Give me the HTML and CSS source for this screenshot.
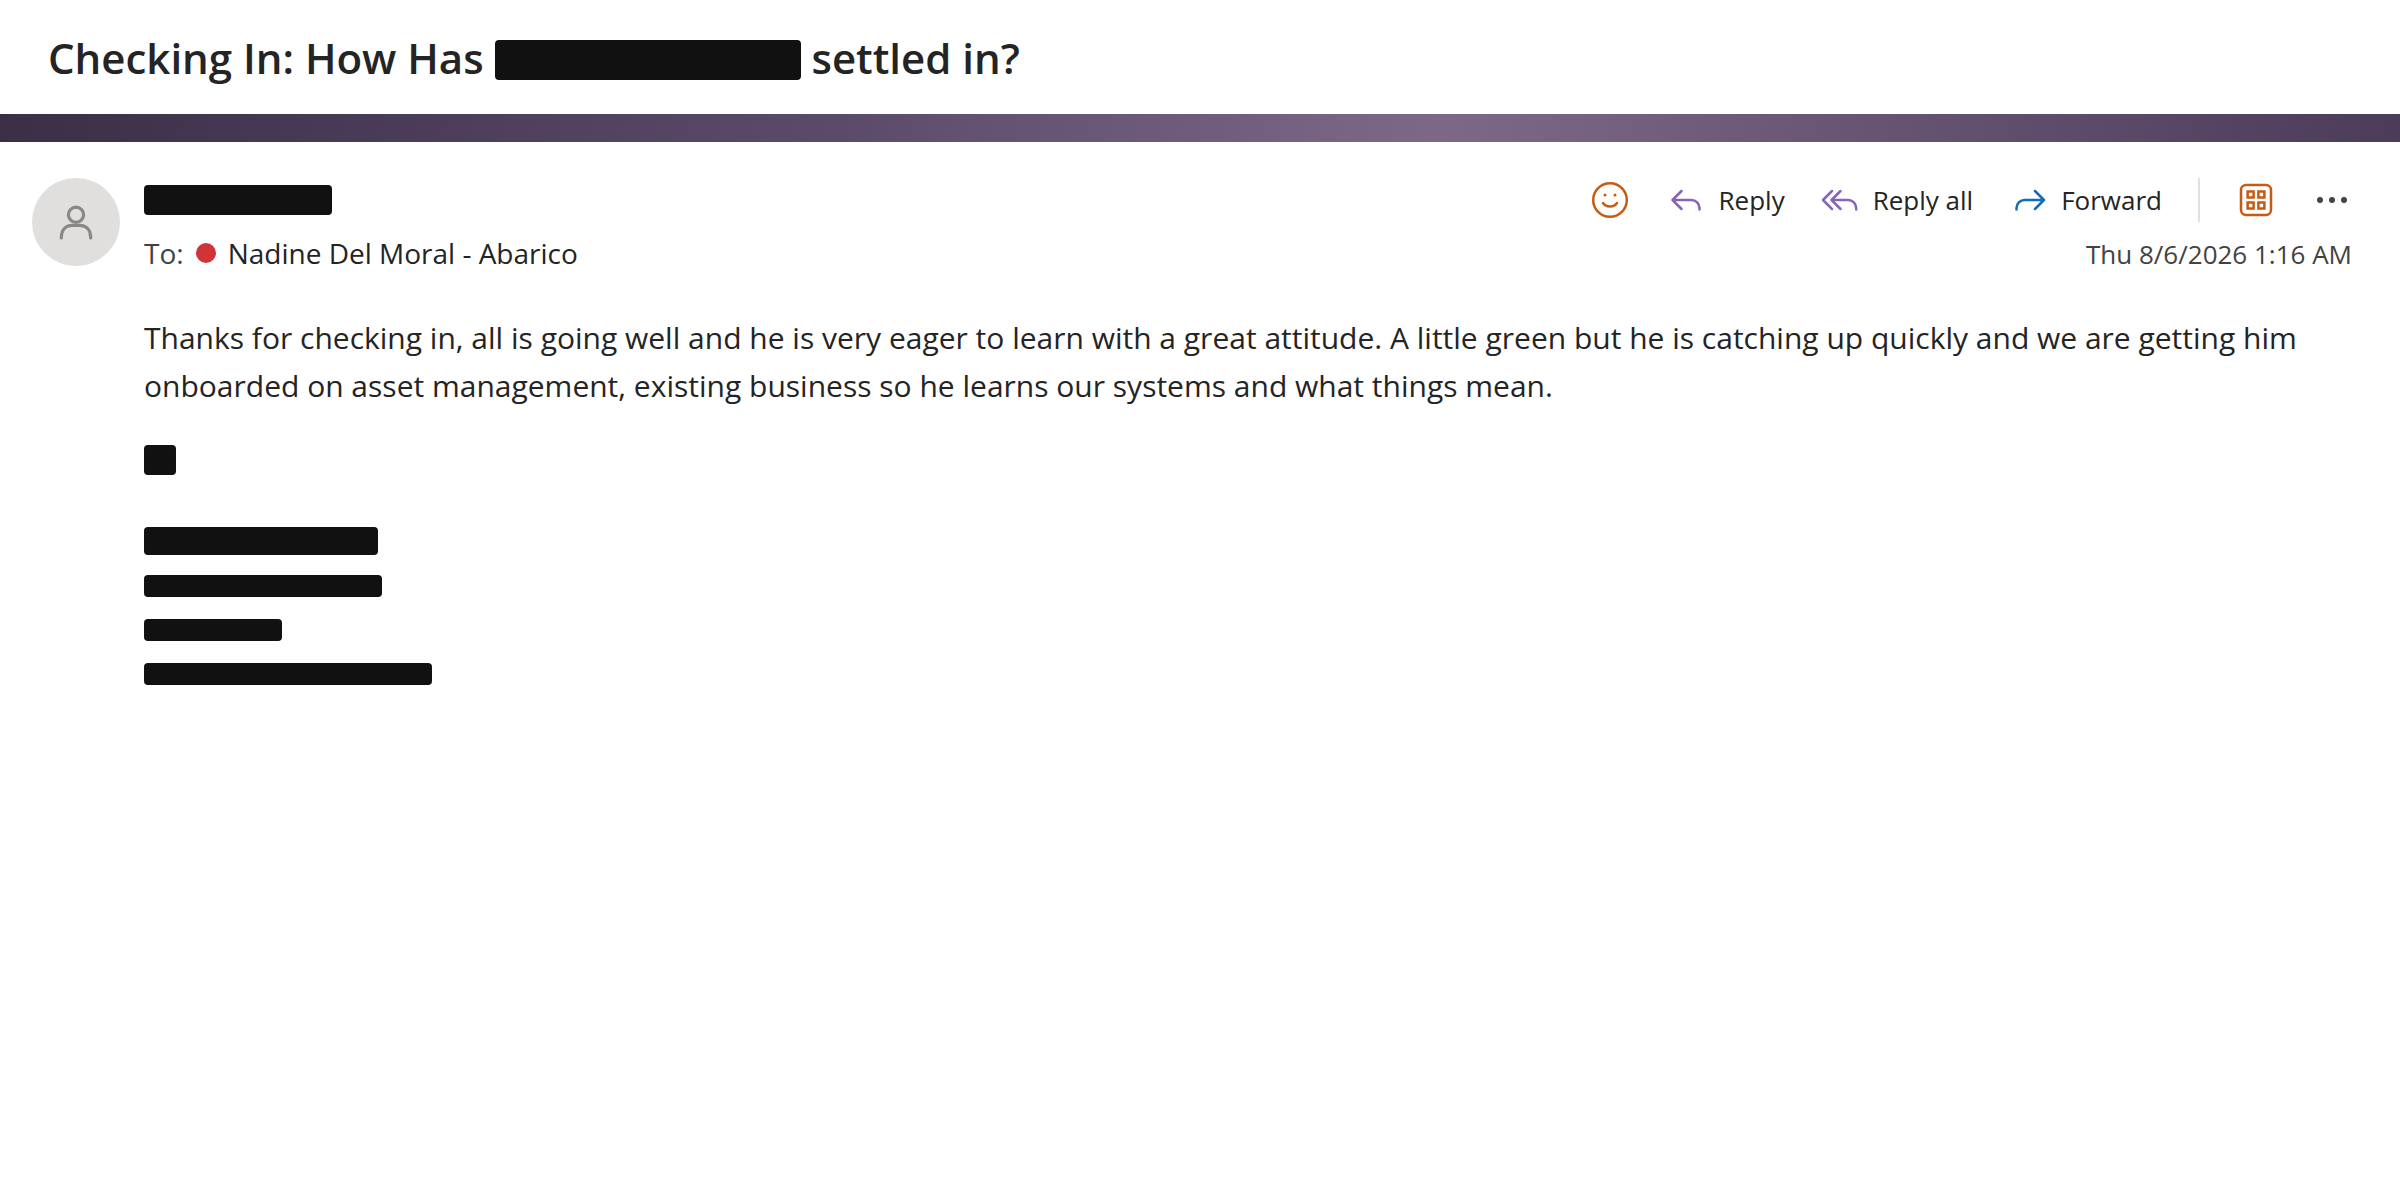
FILE: index.html
```html
<!DOCTYPE html>
<html lang="en">
<head>
    <meta charset="UTF-8">
    <title>Checking In</title>
    <link rel="stylesheet" href="styles.css">
</head>
<body>
<header class="subject">
    <h1>Checking In: How Has <span class="redact redact-title"></span> settled in?</h1>
</header>
<div class="banner"></div>

<main class="message">
    <div class="avatar">
        <svg width="40" height="48" viewBox="0 0 40 48" fill="none" stroke="#8a8886" stroke-width="3.2" stroke-linecap="round">
            <circle cx="20" cy="16.7" r="7.6"/>
            <path d="M5.3 40c0-8 4-12.6 11-12.6h7.4c7 0 11 4.6 11 12.6"/>
        </svg>
    </div>

    <div class="content">
        <div class="row">
            <span class="redact redact-sender"></span>
            <div class="actions">
                <button type="button" aria-label="React">
                    <svg class="orange" viewBox="0 0 40 40">
                        <circle cx="19" cy="20" r="16.8"/>
                        <path d="M12 23c3 4.6 11 4.6 14 0"/>
                        <circle class="dot" cx="14" cy="15" r="1.5"/>
                        <circle class="dot" cx="24" cy="15" r="1.5"/>
                    </svg>
                </button>
                <button type="button">
                    <svg class="purple" viewBox="0 0 40 40">
                        <path d="M14.5 11l-9 9 9 9M5.5 20h19a8 8 0 0 1 8 8v1.6"/>
                    </svg>
                    Reply
                </button>
                <button type="button">
                    <svg class="purple" viewBox="0 0 40 40">
                        <path d="M11 11l-9 9 9 9M19.5 11l-9 9 9 9M10.5 20h16.7a8 8 0 0 1 8 8v1.6"/>
                    </svg>
                    Reply all
                </button>
                <button type="button">
                    <svg class="blue" viewBox="0 0 40 40">
                        <path d="M26 11l9 9-9 9M35 20H15.5a8 8 0 0 0-8 8v1.6"/>
                    </svg>
                    Forward
                </button>
                <span class="divider"></span>
                <button type="button" aria-label="Apps">
                    <svg class="orange" viewBox="0 0 40 40">
                        <rect x="5" y="5" width="30" height="30" rx="5"/>
                        <path class="tiles" d="M11.6 11.6h6v6h-6zM22.4 11.6h6v6h-6zM11.6 22.4h6v6h-6zM22.4 22.4h6v6h-6z"/>
                    </svg>
                </button>
                <button type="button" aria-label="More">
                    <svg class="gray" viewBox="0 0 40 40">
                        <circle class="dot" cx="8" cy="20" r="3"/>
                        <circle class="dot" cx="20" cy="20" r="3"/>
                        <circle class="dot" cx="32" cy="20" r="3"/>
                    </svg>
                </button>
            </div>
        </div>

        <div class="row details">
            <div class="to">
                <span class="label">To:</span>
                <span class="presence"></span>
                <span>Nadine Del Moral - Abarico</span>
            </div>
            <time class="date">Thu 8/6/2026 1:16 AM</time>
        </div>

        <div class="body">
            <p>Thanks for checking in, all is going well and he is very eager to learn with a great attitude. A little green but he is catching up quickly and we are getting him onboarded on asset management, existing business so he learns our systems and what things mean.</p>
            <span class="redact redact-initial"></span>
            <div class="signature">
                <span class="redact sig-name"></span>
                <span class="redact sig-role"></span>
                <span class="redact sig-phone"></span>
                <span class="redact sig-email"></span>
            </div>
        </div>
    </div>
</main>
</body>
</html>
```
FILE: styles.css
```css
* {
    box-sizing: border-box;
}

body, h1, p {
    margin: 0;
    padding: 0;
}

body {
    background: #fff;
    color: #242424;
    font-family: "Open Sans", sans-serif;
    font-size: 26px;
}

.subject {
    padding: 30px 48px 28px;
}

.subject h1 {
    font-size: 42px;
    font-weight: 600;
    line-height: 56px;
}

.redact {
    display: block;
    height: 22px;
    border-radius: 4px;
    background: #111;
}

.redact-title {
    display: inline-block;
    width: 306px;
    height: 40px;
    vertical-align: -6px;
}

.banner {
    height: 28px;
    background: linear-gradient(100deg, #3b2f47 0%, #5b4b6b 35%, #7d6887 60%, #4b3c5a 100%);
}

.message {
    display: flex;
    gap: 24px;
    padding: 36px 48px 36px 32px;
}

.avatar {
    display: flex;
    flex: none;
    align-items: center;
    justify-content: center;
    width: 88px;
    height: 88px;
    border-radius: 50%;
    background: #e1dfdd;
}

.content {
    flex: 1;
    min-width: 0;
}

.row {
    display: flex;
    align-items: center;
    justify-content: space-between;
}

.redact-sender {
    width: 188px;
    height: 30px;
}

.actions {
    display: flex;
    align-items: center;
    gap: 36px;
}

.actions button {
    display: flex;
    align-items: center;
    gap: 12px;
    padding: 0;
    border: 0;
    background: none;
    color: inherit;
    font: inherit;
    cursor: pointer;
}

.actions svg {
    width: 40px;
    height: 40px;
    fill: none;
    stroke: currentColor;
    stroke-width: 2.5;
    stroke-linecap: round;
    stroke-linejoin: round;
}

.actions .dot {
    fill: currentColor;
    stroke: none;
}

.actions .tiles {
    stroke-linejoin: miter;
}

.orange {
    color: #c75b12;
}

.purple {
    color: #8764b8;
}

.blue {
    color: #0f6cbd;
}

.gray {
    color: #424242;
}

.divider {
    width: 2px;
    height: 44px;
    background: #e0e0e0;
}

.details {
    align-items: baseline;
    margin-top: 11px;
    line-height: 40px;
}

.to {
    display: flex;
    align-items: center;
    gap: 12px;
    font-size: 28px;
}

.label, .date {
    color: #424242;
}

.presence {
    width: 20px;
    height: 20px;
    border-radius: 50%;
    background: #d13438;
}

.body {
    margin-top: 40px;
}

.body p {
    font-size: 30px;
    line-height: 48px;
}

.redact-initial {
    width: 32px;
    height: 30px;
    margin-top: 35px;
}

.signature {
    margin-top: 52px;
}

.signature .redact {
    margin-bottom: 22px;
}

.signature .sig-name {
    width: 234px;
    height: 28px;
    margin-bottom: 20px;
}

.sig-role {
    width: 238px;
}

.sig-phone {
    width: 138px;
}

.sig-email {
    width: 288px;
}
```
